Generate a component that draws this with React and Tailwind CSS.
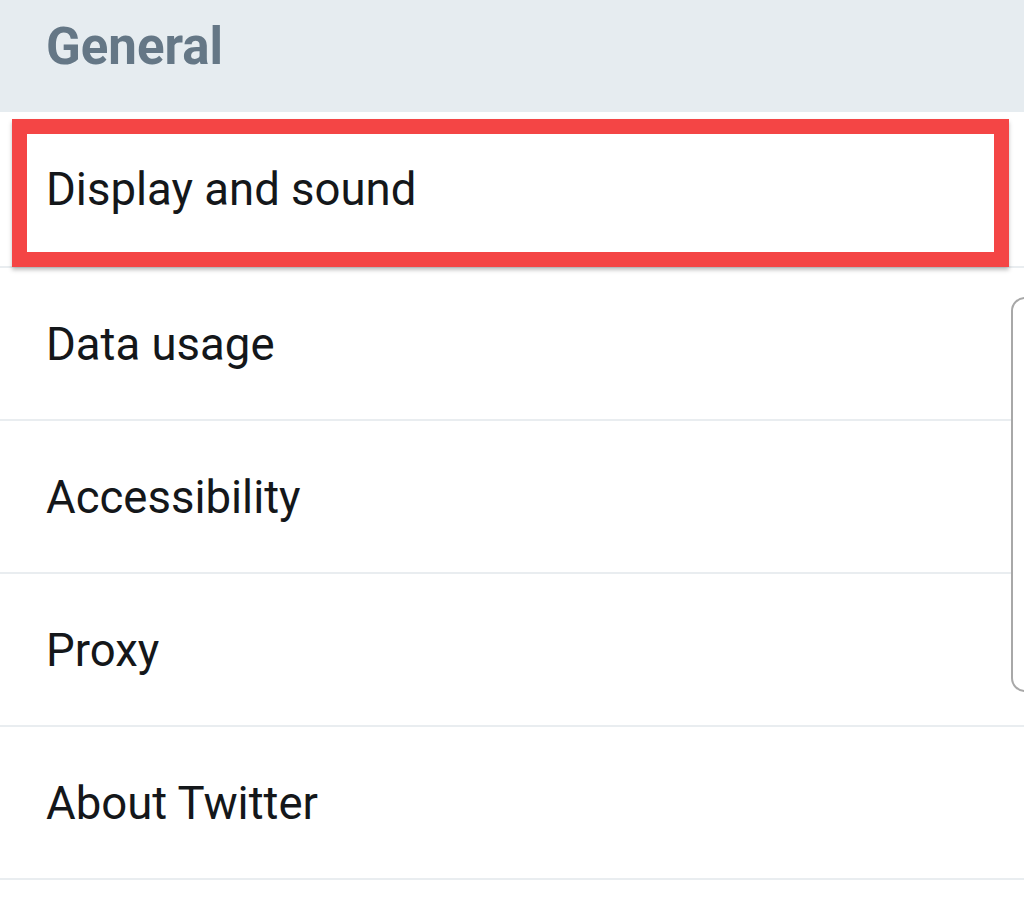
export default function App() {
  const items = ['Display and sound', 'Data usage', 'Accessibility', 'Proxy', 'About Twitter'];

  return (
    <div className="relative w-[1024px] h-[899px] overflow-hidden bg-white" style={{ fontFamily: 'Roboto, "Noto Sans", sans-serif' }}>
      <div className="h-[112px] bg-[#e6ecf0] pl-[46px] pt-[15px]">
        <h2 className="text-[51px] leading-[64px] font-bold text-[#657786]">General</h2>
      </div>

      <ul>
        {items.map((item, idx) => (
          <li
            key={idx}
            className={`relative flex items-center pl-[46px] border-b-2 border-[#e9edf0] text-[45.5px] text-[#14171a] ${idx === 0 ? 'h-[156px]' : 'h-[153px]'}`}
          >
            {idx === 0 && (
              <div className="absolute left-[12px] top-[7px] w-[997px] h-[148px] border-[15px] border-[#f44545] shadow-[0_3px_4px_rgba(0,0,0,0.25)]" />
            )}
            <span className="relative pt-[3px]">{item}</span>
          </li>
        ))}
      </ul>

      {/* scroll indicator */}
      <div className="absolute left-[1011px] top-[297px] w-[40px] h-[395px] rounded-[14px] border-2 border-[#a8a8a8] bg-white" />
    </div>
  );
}
